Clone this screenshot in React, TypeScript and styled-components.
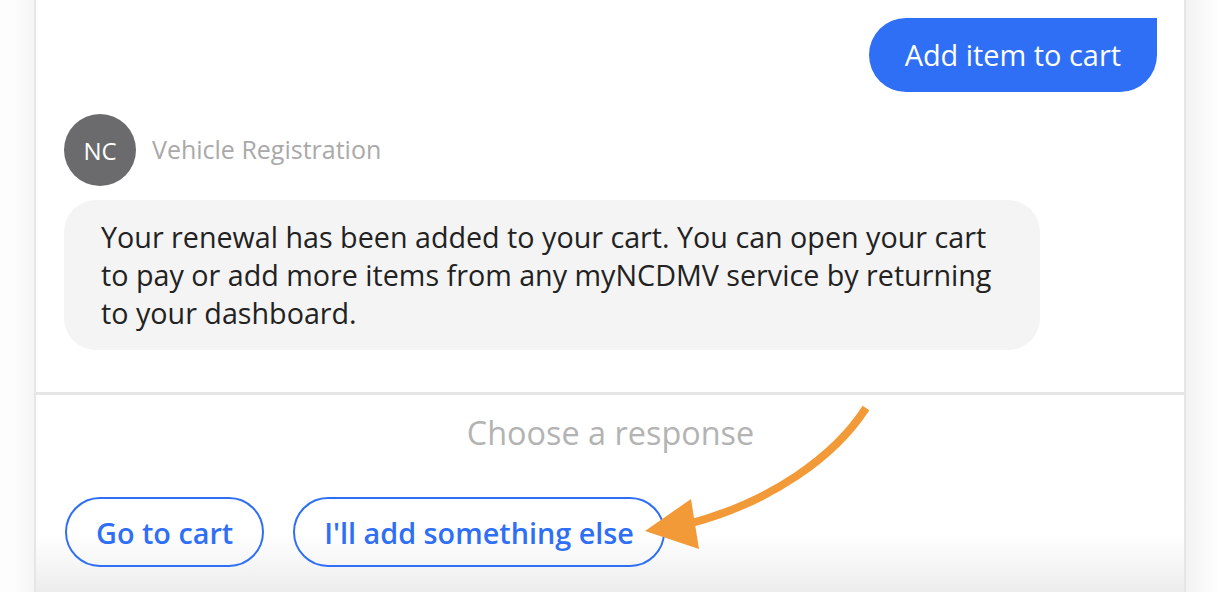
import React from "react";
import styled, { createGlobalStyle } from "styled-components";

const Global = createGlobalStyle`
  html, body { margin: 0; padding: 0; background: #fff; }
  body { font-family: "Open Sans", "Noto Sans", sans-serif; overflow: hidden; }
  * { box-sizing: border-box; }
`;

const Page = styled.div`
  position: relative;
  display: flex;
  width: 1218px;
  height: 592px;
  overflow: hidden;
`;

const Gutter = styled.div<{ $side: "left" | "right" }>`
  flex: 0 0 ${(p) => (p.$side === "left" ? "34px" : "32px")};
  background: ${(p) =>
    p.$side === "left"
      ? "linear-gradient(to left, #f5f5f5, #fdfdfd 60%)"
      : "linear-gradient(to right, #f2f2f2, #fafafa 60%, #fdfdfd)"};
`;

const Panel = styled.div`
  flex: 1;
  display: flex;
  flex-direction: column;
  background: #fff;
  border-left: 2px solid #e6e6e6;
  border-right: 2px solid #e6e6e6;
`;

const Conversation = styled.div`
  display: flex;
  flex-direction: column;
  padding: 18px 27px 42px 28px;
  border-bottom: 3px solid #e6e6e6;
`;

const UserBubble = styled.div`
  align-self: flex-end;
  height: 74px;
  padding: 0 36px;
  background: #2f6ff5;
  color: #fff;
  font-size: 28.9px;
  line-height: 74px;
  white-space: nowrap;
  border-radius: 37px 0 37px 37px;
`;

const BotHeader = styled.div`
  display: flex;
  align-items: center;
  gap: 16px;
  margin-top: 22px;
`;

const Avatar = styled.div`
  width: 72px;
  height: 72px;
  border-radius: 50%;
  background: #6b6b6e;
  color: #fff;
  font-size: 24px;
  display: flex;
  align-items: center;
  justify-content: center;
`;

const BotName = styled.div`
  color: #a9a9a9;
  font-size: 25px;
  line-height: 30px;
  margin-top: -2px;
`;

const BotBubble = styled.div`
  width: 976px;
  margin-top: 14px;
  padding: 18px 36px 18px 37px;
  background: #f4f4f4;
  color: #222;
  font-size: 28.7px;
  line-height: 38px;
  border-radius: 32px;
`;

const Responses = styled.div`
  flex: 1;
  display: flex;
  flex-direction: column;
  padding: 17px 28px 0 29px;
  background: linear-gradient(to bottom, #fff 0%, #fff 70%, #f6f6f6 86%, #ececec 100%);
`;

const Prompt = styled.div`
  text-align: center;
  color: #b3b3b3;
  font-size: 32.4px;
  line-height: 40px;
`;

const ButtonRow = styled.div`
  display: flex;
  gap: 29px;
  margin-top: 45px;
`;

const ChoiceButton = styled.button`
  height: 70px;
  padding: 0 29px;
  border: 2px solid #2f6ff5;
  border-radius: 35px;
  background: transparent;
  color: #2f6ff5;
  font-family: "Open Sans", "Noto Sans", sans-serif;
  font-weight: 600;
  font-size: 28.8px;
  white-space: nowrap;
  cursor: pointer;
`;

const Annotation = styled.svg`
  position: absolute;
  left: 0;
  top: 0;
  pointer-events: none;
`;

export default function App() {
  return (
    <>
      <Global />
      <Page>
        <Gutter $side="left" />
        <Panel>
          <Conversation>
            <UserBubble>Add item to cart</UserBubble>
            <BotHeader>
              <Avatar>NC</Avatar>
              <BotName>Vehicle Registration</BotName>
            </BotHeader>
            <BotBubble>
              Your renewal has been added to your cart. You can open your cart
              to pay or add more items from any myNCDMV service by returning to
              your dashboard.
            </BotBubble>
          </Conversation>
          <Responses>
            <Prompt>Choose a response</Prompt>
            <ButtonRow>
              <ChoiceButton>Go to cart</ChoiceButton>
              <ChoiceButton>I'll add something else</ChoiceButton>
            </ButtonRow>
          </Responses>
        </Panel>
        <Gutter $side="right" />
        <Annotation width="1218" height="592" viewBox="0 0 1218 592">
          <path
            d="M866 408 C 835 456, 772 502, 688 524"
            fill="none"
            stroke="#f29a38"
            strokeWidth="8"
          />
          <polygon points="645,531 691,499 699,549" fill="#f29a38" />
        </Annotation>
      </Page>
    </>
  );
}
